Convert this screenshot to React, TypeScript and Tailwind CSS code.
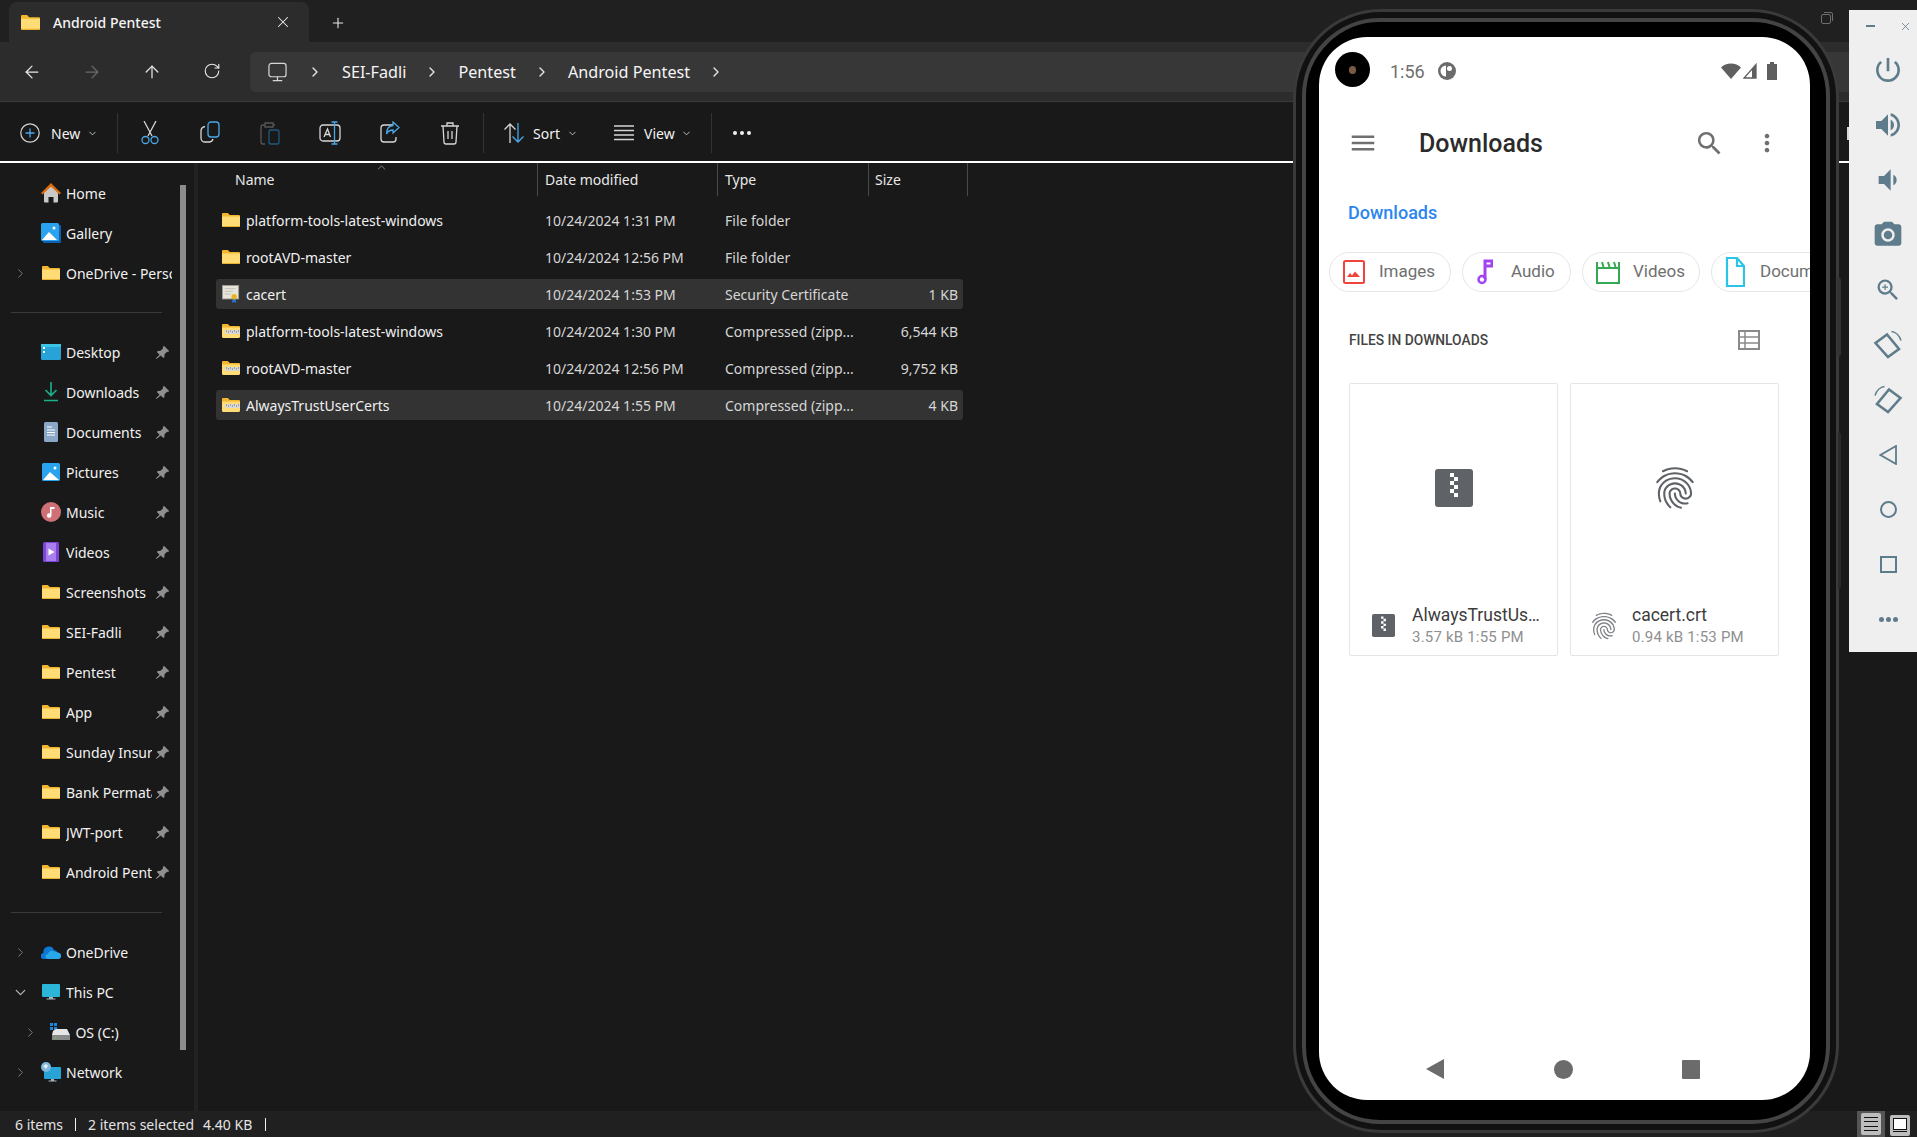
import type { ReactNode } from "react";
import {
	ArrowLeft,
	ArrowRight,
	ArrowUp,
	ChevronDown,
	ChevronRight,
	ChevronUp,
	Plus,
	RotateCw,
	X,
} from "lucide-react";
import {
	MdFingerprint,
	MdMenu,
	MdMoreVert,
	MdPowerSettingsNew,
	MdSearch,
	MdVolumeDown,
	MdVolumeUp,
	MdPhotoCamera,
	MdZoomIn,
} from "react-icons/md";

const UI_FONT = "font-['Noto_Sans','Open_Sans',sans-serif]";

function Folder({ className = "" }: { className?: string }) {
	return (
		<svg viewBox="0 0 18 14" className={className}>
			<path d="M0 1.2C0 .5.5 0 1.2 0h4.6l2 2h9c.7 0 1.2.5 1.2 1.2V6H0z" fill="#f4b62c" />
			<path d="M0 3.4h18v9.4c0 .7-.5 1.2-1.2 1.2H1.2C.5 14 0 13.500 0 12.800z" fill="#ffdc76" />
			<path d="M0 13h18v.3c-.2.4-.6.7-1.200.7H1.200C.6 14 .2 13.700 0 13.300z" fill="#eab12c" />
		</svg>
	);
}

function ZipFolder({ className = "" }: { className?: string }) {
	return (
		<svg viewBox="0 0 18 14" className={className}>
			<path d="M0 1.2C0 .5.5 0 1.2 0h4.6l2 2h9c.7 0 1.2.5 1.2 1.2V6H0z" fill="#f4b62c" />
			<path d="M0 3.4h18v9.4c0 .7-.5 1.2-1.2 1.2H1.2C.5 14 0 13.500 0 12.800z" fill="#ffdc76" />
			<rect x="3" y="6" width="15" height="4" fill="#d8d8d8" />
			<path d="M4 7h1M6 8h1M8 7h1M10 8h1M12 7h1M14 8h1M16 7h1" stroke="#6a6a6a" strokeWidth="1.2" />
		</svg>
	);
}

function CertIcon() {
	return (
		<svg viewBox="0 0 20 20" className="h-[20px] w-[20px]">
			<rect x="0.5" y="0.5" width="18" height="15" fill="#e8e4d6" stroke="#9a9a9a" />
			<path d="M3 4h12M3 7h9M3 10h7" stroke="#bdbdbd" />
			<path d="M12 14l-1 6 2.500-1.200L16 20l-1-6z" fill="#2f6fd0" />
			<circle cx="13.500" cy="13" r="3" fill="#e6b422" />
		</svg>
	);
}

function PinIcon() {
	return (
		<svg viewBox="0 0 14 14" className="h-[15px] w-[15px]" fill="#8f8f8f">
			<path d="M8.300.8l4.900 4.900-1 .8-.9-.2-2.400 2.400-.1 2.500-1 1-2.500-2.500L1.500 13 .9 12.400 4.200 9 1.700 6.500l1-1 2.500-.1 2.400-2.400-.2-.9z" />
		</svg>
	);
}

const navIcons: Record<string, ReactNode> = {
	home: (
		<svg viewBox="0 0 20 20" className="h-[20px] w-[20px]">
			<path d="M3 9L10 3l7 6v9.500a1 1 0 0 1-1 1h-3.500V14h-5v5.500H4a1 1 0 0 1-1-1z" fill="#c9c9c9" />
			<path d="M0 10L10 0l10 10-1.500 1.500L10 3.500 1.500 11.500z" fill="#e26b0a" />
		</svg>
	),
	gallery: (
		<svg viewBox="0 0 20 20" className="h-[20px] w-[20px]">
			<rect x="2" y="2" width="18" height="18" rx="1" fill="#0f5fae" />
			<rect x="0" y="0" width="18" height="18" rx="1.500" fill="#2aa3ee" />
			<path d="M1 17l7-8 8 8z" fill="#fff" />
			<circle cx="13" cy="5" r="1.500" fill="#fff" />
		</svg>
	),
	desktop: (
		<svg viewBox="0 0 20 16" className="h-[16px] w-[20px]">
			<rect width="20" height="16" rx="1.500" fill="#27a3d8" />
			<rect y="0" width="20" height="3" fill="#3cc4e4" />
			<rect x="2" y="3" width="2" height="2" fill="#fff" />
			<rect x="2" y="7" width="2" height="2" fill="#fff" />
		</svg>
	),
	downloads: (
		<svg viewBox="0 0 16 20" className="h-[20px] w-[16px]" fill="none" stroke="#19b38b" strokeWidth="1.600">
			<path d="M8 0v13M2.500 8L8 13.500 13.500 8M1 18.500h14" />
		</svg>
	),
	documents: (
		<svg viewBox="0 0 14 20" className="h-[20px] w-[14px]">
			<rect width="14" height="20" rx="1.500" fill="#8aa7c7" />
			<path d="M3 5h5M3 8h8M3 10.500h8M3 13h8" stroke="#fff" />
		</svg>
	),
	pictures: (
		<svg viewBox="0 0 18 18" className="h-[18px] w-[18px]">
			<rect width="18" height="18" rx="1.500" fill="#2aa3ee" />
			<path d="M1 17l7-8 9 8z" fill="#fff" />
			<circle cx="13" cy="5" r="1.500" fill="#fff" />
		</svg>
	),
	music: (
		<svg viewBox="0 0 20 20" className="h-[20px] w-[20px]">
			<circle cx="10" cy="10" r="10" fill="#cf6f76" />
			<path d="M9 5h4.500v2H10.500v6.500a2.300 2.300 0 1 1-1.500-2.100z" fill="#fff" />
		</svg>
	),
	videos: (
		<svg viewBox="0 0 16 20" className="h-[20px] w-[16px]">
			<rect width="16" height="20" rx="1.500" fill="#7c45d8" />
			<rect x="3" y="1" width="10" height="18" fill="#a97ff0" />
			<path d="M5.500 6.500l6 3.500-6 3.500z" fill="#fff" />
		</svg>
	),
	onedrive: (
		<svg viewBox="0 0 20 14" className="h-[14px] w-[20px]">
			<path d="M3 14a3 3 0 0 1-.5-6 5.500 5.500 0 0 1 10.500-3 4 4 0 0 1 3.500 2.500A3.300 3.300 0 0 1 17 14z" fill="#0f78d4" />
			<path d="M7 14a2.500 2.500 0 0 1 0-5 4 4 0 0 1 6.500-2.200 3.500 3.500 0 0 1 3.500 1 3 3 0 0 1 0 6.200z" fill="#28a8ea" />
		</svg>
	),
	pc: (
		<svg viewBox="0 0 18 16" className="h-[16px] w-[18px]">
			<rect width="18" height="13" rx="1" fill="#2bb5d6" />
			<path d="M7 13h4v1.500h2.500v1h-9v-1H7z" fill="#a8b4bd" />
		</svg>
	),
	drive: (
		<svg viewBox="0 0 20 18" className="h-[18px] w-[20px]">
			<path d="M0 0h3v3H0zM4 0h3v3H4zM0 4h3v3H0zM4 4h3v3H4z" fill="#1b88e0" />
			<path d="M3 8l3-2h11l3 6H2z" fill="#e6e6e6" />
			<rect x="2" y="12" width="18" height="5" fill="#8a8a8a" />
			<rect x="5" y="14" width="1.500" height="1.500" fill="#43d45a" />
		</svg>
	),
	network: (
		<svg viewBox="0 0 20 20" className="h-[20px] w-[20px]">
			<rect x="3" y="5" width="17" height="12" rx="1" fill="#27a3d8" />
			<path d="M10 17h3v1.500h2.500v1h-8v-1H10z" fill="#a8b4bd" />
			<circle cx="5" cy="5" r="5" fill="#7fb8dc" />
			<path d="M2 4l3-2 2 2-2 3z" fill="#e4eef5" />
		</svg>
	),
};

type NavItem = { label: string; icon: ReactNode; pin?: boolean; chevron?: "right" | "down"; indent?: boolean };

function NavRow({ label, icon, pin, chevron, indent }: NavItem) {
	return (
		<div className={`flex h-10 items-center ${indent ? "pl-[10px]" : ""}`}>
			<div className="flex w-[41px] justify-center pl-[0px]">
				{chevron === "right" && <ChevronRight size={15} strokeWidth={1.6} className="text-[#7a7a7a]" />}
				{chevron === "down" && <ChevronDown size={17} strokeWidth={1.8} className="text-[#b8b8b8]" />}
			</div>
			<div className="flex w-[20px] justify-center">{icon}</div>
			<div className={`ml-[5px] overflow-hidden whitespace-nowrap text-[14px] text-[#f2f2f2] ${pin ? "w-[86px]" : "w-[106px]"}`}>
				{label}
			</div>
			{pin && (
				<div className="ml-[3px]">
					<PinIcon />
				</div>
			)}
		</div>
	);
}

const folder = <Folder className="h-[14px] w-[18px]" />;

const quickAccess: NavItem[] = [
	{ label: "Desktop", icon: navIcons.desktop, pin: true },
	{ label: "Downloads", icon: navIcons.downloads, pin: true },
	{ label: "Documents", icon: navIcons.documents, pin: true },
	{ label: "Pictures", icon: navIcons.pictures, pin: true },
	{ label: "Music", icon: navIcons.music, pin: true },
	{ label: "Videos", icon: navIcons.videos, pin: true },
	{ label: "Screenshots", icon: folder, pin: true },
	{ label: "SEI-Fadli", icon: folder, pin: true },
	{ label: "Pentest", icon: folder, pin: true },
	{ label: "App", icon: folder, pin: true },
	{ label: "Sunday Insurance", icon: folder, pin: true },
	{ label: "Bank Permata", icon: folder, pin: true },
	{ label: "JWT-port", icon: folder, pin: true },
	{ label: "Android Pentest", icon: folder, pin: true },
];

const files = [
	{ name: "platform-tools-latest-windows", date: "10/24/2024 1:31 PM", type: "File folder", size: "", kind: "folder" },
	{ name: "rootAVD-master", date: "10/24/2024 12:56 PM", type: "File folder", size: "", kind: "folder" },
	{ name: "cacert", date: "10/24/2024 1:53 PM", type: "Security Certificate", size: "1 KB", kind: "cert", selected: true },
	{ name: "platform-tools-latest-windows", date: "10/24/2024 1:30 PM", type: "Compressed (zipp...", size: "6,544 KB", kind: "zip" },
	{ name: "rootAVD-master", date: "10/24/2024 12:56 PM", type: "Compressed (zipp...", size: "9,752 KB", kind: "zip" },
	{ name: "AlwaysTrustUserCerts", date: "10/24/2024 1:55 PM", type: "Compressed (zipp...", size: "4 KB", kind: "zip", selected: true },
];

function ToolIcon({ children }: { children: ReactNode }) {
	return <div className="flex w-[60px] justify-center">{children}</div>;
}

function Divider() {
	return <div className="h-[40px] w-px bg-[#333333]" />;
}

function Toolbar() {
	return (
		<div className="flex h-[59px] items-center bg-[#191919] pt-[3px] text-[14px] text-[#f2f2f2]">
			<svg viewBox="0 0 20 20" className="ml-[20px] h-[20px] w-[20px]" fill="none">
				<circle cx="10" cy="10" r="9.200" stroke="#d6d6d6" strokeWidth="1.200" />
				<path d="M10 5.500v9M5.500 10h9" stroke="#4aa8e8" strokeWidth="1.300" />
			</svg>
			<span className="ml-[11px] w-[32px]">New</span>
			<ChevronDown size={11} className="ml-[4px] text-[#c8c8c8]" />
			<div className="ml-[19px]">
				<Divider />
			</div>
			<div className="ml-[2px] flex">
				<ToolIcon>
					<svg viewBox="0 0 20 24" className="h-[24px] w-[20px]" fill="none" strokeWidth="1.300">
						<path d="M4 0l8 15M16 0L8 15" stroke="#d6d6d6" />
						<circle cx="5.500" cy="19" r="3.500" stroke="#4aa8e8" />
						<circle cx="14.500" cy="19" r="3.500" stroke="#4aa8e8" />
					</svg>
				</ToolIcon>
				<ToolIcon>
					<svg viewBox="0 0 20 22" className="h-[22px] w-[20px]" fill="none" strokeWidth="1.300">
						<rect x="8" y="1" width="11" height="15" rx="3" stroke="#4aa8e8" />
						<path d="M5 5.500C2.500 6 1 7.500 1 10v7c0 2.500 2 4 4 4h4c2 0 3.500-1 4-3" stroke="#d6d6d6" />
					</svg>
				</ToolIcon>
				<ToolIcon>
					<svg viewBox="0 0 20 24" className="h-[24px] w-[20px]" fill="none" strokeWidth="1.300">
						<path d="M5 4H3a2 2 0 0 0-2 2v15a2 2 0 0 0 2 2h2M13 4h2M5 2h8v4H5z" stroke="#575757" />
						<rect x="9" y="9" width="10" height="14" rx="2" stroke="#1f5a80" />
					</svg>
				</ToolIcon>
				<ToolIcon>
					<svg viewBox="0 0 22 24" className="h-[24px] w-[22px]" fill="none" strokeWidth="1.300">
						<rect x="1" y="4" width="20" height="16" rx="3" stroke="#d6d6d6" />
						<path d="M5 16l3.500-8 3 8M6 13.500h5" stroke="#d6d6d6" />
						<path d="M15.500 1v22M12.500 1h6M12.500 23h6" stroke="#4aa8e8" />
					</svg>
				</ToolIcon>
				<ToolIcon>
					<svg viewBox="0 0 20 22" className="h-[22px] w-[20px]" fill="none" strokeWidth="1.300">
						<path d="M13 4H4a3 3 0 0 0-3 3v11a3 3 0 0 0 3 3h9a3 3 0 0 0 3-3v-2" stroke="#d6d6d6" />
						<path d="M13 1l6 5.500-6 5.500V9c-3 0-5 1-6.500 4 0-5 2.500-8 6.500-8.500z" stroke="#4aa8e8" />
					</svg>
				</ToolIcon>
				<ToolIcon>
					<svg viewBox="0 0 20 24" className="h-[24px] w-[20px]" fill="none" stroke="#d6d6d6" strokeWidth="1.300">
						<path d="M1 5h18M7 5V2h6v3M3 5l1 16a2 2 0 0 0 2 2h8a2 2 0 0 0 2-2l1-16M8 10v8M12 10v8" />
					</svg>
				</ToolIcon>
			</div>
			<div className="ml-[3px]">
				<Divider />
			</div>
			<svg viewBox="0 0 22 22" className="ml-[19px] h-[22px] w-[22px]" fill="none" strokeWidth="1.300">
				<path d="M7 21V2M1.500 7.500L7 2l5.500 5.500" stroke="#d6d6d6" />
				<path d="M15 1v19M9.500 14.500L15 20l5.500-5.500" stroke="#4aa8e8" />
			</svg>
			<span className="ml-[8px] w-[30px]">Sort</span>
			<ChevronDown size={11} className="ml-[4px] text-[#c8c8c8]" />
			<svg viewBox="0 0 20 16" className="ml-[36px] h-[16px] w-[20px]" stroke="#d6d6d6" strokeWidth="1.300">
				<path d="M0 1h20M0 5.500h20M0 10h20M0 14.500h20" />
			</svg>
			<span className="ml-[10px] w-[34px]">View</span>
			<ChevronDown size={11} className="ml-[3px] text-[#c8c8c8]" />
			<div className="ml-[19px]">
				<Divider />
			</div>
			<div className="ml-[21px] flex gap-[3px]">
				<div className="h-[4px] w-[4px] rounded-full bg-[#f0f0f0]" />
				<div className="h-[4px] w-[4px] rounded-full bg-[#f0f0f0]" />
				<div className="h-[4px] w-[4px] rounded-full bg-[#f0f0f0]" />
			</div>
		</div>
	);
}

function Crumb() {
	return <ChevronRight size={16} strokeWidth={2} className="text-[#e6e6e6]" />;
}

function AddressRow() {
	return (
		<div className="flex h-[60px] items-center border-b border-[#3a3a3a] bg-[#2c2c2c]">
			<div className="flex w-[250px] pl-[2px] text-[#e8e8e8]">
				<div className="flex w-[60px] justify-center">
					<ArrowLeft size={20} strokeWidth={1.5} />
				</div>
				<div className="flex w-[60px] justify-center text-[#6b6b6b]">
					<ArrowRight size={20} strokeWidth={1.5} />
				</div>
				<div className="flex w-[60px] justify-center">
					<ArrowUp size={20} strokeWidth={1.5} />
				</div>
				<div className="flex w-[60px] justify-center">
					<RotateCw size={18} strokeWidth={1.5} />
				</div>
			</div>
			<div className="flex h-[40px] flex-1 items-center rounded-l-md bg-[#373737] pt-[1px] text-[16.2px] text-[#f5f5f5]">
				<svg viewBox="0 0 20 20" className="ml-[18px] h-[20px] w-[19px]" fill="none" stroke="#d6d6d6" strokeWidth="1.300">
					<rect x="1" y="1" width="18" height="14" rx="2.500" />
					<path d="M10 15v4M5 19h10" />
				</svg>
				<div className="ml-[20px] mr-[19px]">
					<Crumb />
				</div>
				<span>SEI-Fadli</span>
				<div className="mx-[18px]">
					<Crumb />
				</div>
				<span>Pentest</span>
				<div className="mx-[18px]">
					<Crumb />
				</div>
				<span>Android Pentest</span>
				<div className="ml-[18px]">
					<Crumb />
				</div>
			</div>
		</div>
	);
}

function TabBar() {
	return (
		<div className="flex h-[42px] items-end bg-[#202020] pl-[9px]">
			<div className="flex h-[40px] w-[300px] items-center rounded-t-lg bg-[#2c2c2c] pl-[12px] text-[14px] font-medium text-[#f5f5f5]">
				<Folder className="h-[15px] w-[19px]" />
				<span className="ml-[13px]">Android Pentest</span>
				<X size={18} strokeWidth={1.4} className="ml-auto mr-[17px] text-[#e8e8e8]" />
			</div>
			<div className="mb-[11px] ml-[21px] text-[#e8e8e8]">
				<Plus size={16} strokeWidth={1.6} />
			</div>
		</div>
	);
}

function Sidebar() {
	return (
		<div className="box-content flex w-[194px] border-r-[4px] border-[#222222]">
			<div className="w-[180px] pt-[10px]">
				<NavRow label="Home" icon={navIcons.home} />
				<NavRow label="Gallery" icon={navIcons.gallery} />
				<NavRow label="OneDrive - Personal" icon={folder} chevron="right" />
				<div className="flex h-[39px] items-center pl-[11px]">
					<div className="h-px w-[151px] bg-[#3a3a3a]" />
				</div>
				{quickAccess.map((item) => (
					<NavRow key={item.label} {...item} />
				))}
				<div className="flex h-[40px] items-center pl-[11px]">
					<div className="h-px w-[151px] bg-[#3a3a3a]" />
				</div>
				<NavRow label="OneDrive" icon={navIcons.onedrive} chevron="right" />
				<NavRow label="This PC" icon={navIcons.pc} chevron="down" />
				<NavRow label="OS (C:)" icon={navIcons.drive} chevron="right" indent />
				<NavRow label="Network" icon={navIcons.network} chevron="right" />
			</div>
			<div className="mt-[22px] h-[865px] w-[6px] bg-[#8c8c8c]" />
		</div>
	);
}

function FileIcon({ kind }: { kind: string }) {
	if (kind === "cert") return <CertIcon />;
	if (kind === "zip") return <ZipFolder className="h-[14px] w-[18px]" />;
	return <Folder className="h-[14px] w-[18px]" />;
}

function FileList() {
	return (
		<div className="relative flex-1 pl-[18px] text-[14px] text-[#f0f0f0]">
			<ChevronUp size={13} strokeWidth={1.2} className="absolute left-[177px] top-[-2px] text-[#bdbdbd]" />
			<div className="flex h-[33px] items-center text-[#e8e8e8]">
				<div className="flex h-full w-[322px] items-center border-r border-[#4a4a4a] pl-[19px]">Name</div>
				<div className="flex h-full w-[180px] items-center border-r border-[#4a4a4a] pl-[7px]">Date modified</div>
				<div className="flex h-full w-[151px] items-center border-r border-[#4a4a4a] pl-[7px]">Type</div>
				<div className="flex h-full w-[99px] items-center border-r border-[#4a4a4a] pl-[6px]">Size</div>
			</div>
			<div className="mt-[9px] flex w-[747px] flex-col gap-[7px]">
				{files.map((f) => (
					<div key={f.name + f.date} className={`flex h-[30px] items-center rounded-[3px] ${f.selected ? "bg-[#333333]" : ""}`}>
						<div className="flex w-[321px] items-center pl-[6px]">
							<div className="flex w-[18px] justify-center">
								<FileIcon kind={f.kind} />
							</div>
							<span className="ml-[6px] whitespace-nowrap">{f.name}</span>
						</div>
						<div className="w-[180px] pl-[8px] text-[#d6d6d6]">{f.date}</div>
						<div className="w-[150px] pl-[8px] text-[#d6d6d6]">{f.type}</div>
						<div className="w-[96px] pr-[5px] text-right text-[#d6d6d6]">{f.size}</div>
					</div>
				))}
			</div>
		</div>
	);
}

function StatusBar() {
	return (
		<div className="relative flex h-[26px] items-center bg-[#202020] pl-[15px] text-[14px] text-[#e4e4e4]">
			<span>6 items</span>
			<div className="ml-[12px] h-[13px] w-px bg-[#f0f0f0]" />
			<span className="ml-[12px]">2 items selected</span>
			<span className="ml-[9px]">4.40 KB</span>
			<div className="ml-[13px] h-[13px] w-px bg-[#f0f0f0]" />
			<div className="absolute right-[32px] top-0 flex h-[26px] w-[28px] items-center justify-center bg-[#555555]">
				<div className="flex h-[22px] w-[20px] flex-col justify-evenly rounded-[2px] bg-[#bdbdbd] px-[3px]">
					<div className="h-px bg-[#111111]" />
					<div className="h-px bg-[#111111]" />
					<div className="h-px bg-[#111111]" />
					<div className="h-px bg-[#111111]" />
				</div>
			</div>
			<div className="absolute right-[7px] top-[4px] flex h-[21px] w-[20px] flex-col items-center rounded-[2px] bg-[#bdbdbd] p-[3px]">
				<div className="h-[12px] w-[14px] border border-[#111111] bg-white" />
				<div className="mt-[1px] h-px w-[14px] bg-[#111111]" />
			</div>
		</div>
	);
}

function ZipGlyph({ size }: { size: "lg" | "sm" }) {
	const big = size === "lg";
	return (
		<svg viewBox="0 0 38 38" className={big ? "h-[38px] w-[38px]" : "h-[23px] w-[23px]"}>
			<rect width="38" height="38" rx="3" fill="#5f6368" />
			<path d="M15 4h4v4h-4zM19 8h4v4h-4zM15 12h4v4h-4zM19 16h4v4h-4zM15 20h4v4h-4zM19 24h4v4h-4z" fill="#fff" />
		</svg>
	);
}

function Chip({ icon, label, className }: { icon: ReactNode; label: string; className: string }) {
	return (
		<div className={`flex h-[40px] shrink-0 items-center rounded-full border-[1.5px] border-[#e6e6e6] pl-[13px] text-[17px] text-[#6f6f6f] ${className}`}>
			{icon}
			<span>{label}</span>
		</div>
	);
}

function FileCard({ icon, small, title, sub, pad }: { icon: ReactNode; small: ReactNode; title: string; sub: string; pad: string }) {
	return (
		<div className="flex h-[273px] w-[209px] flex-col rounded-[2px] border-[1.5px] border-[#e5e5e5]">
			<div className="flex h-[208px] items-center justify-center">{icon}</div>
			<div className={`mt-[12px] flex items-center ${pad}`}>
				<div className="flex w-[23px] justify-center">{small}</div>
				<div className="ml-[17px] w-[128px] min-w-0">
					<div className="truncate text-[17.5px] leading-[22px] text-[#3c3c3c]">{title}</div>
					<div className="mt-[1px] text-[15px] leading-[20px] tracking-[0.2px] text-[#8f8f8f]">{sub}</div>
				</div>
			</div>
		</div>
	);
}

function PhoneScreen() {
	return (
		<div className="relative flex h-[1063px] w-[491px] flex-col overflow-hidden rounded-[48px] bg-white font-['Roboto',sans-serif]">
			<div className="absolute left-[16px] top-[15px] flex h-[35px] w-[35px] items-center justify-center rounded-full bg-black">
				<div className="h-[8px] w-[7px] rounded-full bg-[#7a5a44]" />
			</div>
			<div className="flex h-[68px] shrink-0 items-center pl-[71px] pr-[31px] text-[#6f6f6f]">
				<span className="text-[18px]">1:56</span>
				<svg viewBox="0 0 18 18" className="ml-[13px] h-[18px] w-[18px]">
					<circle cx="9" cy="9" r="9" fill="#6b6b6b" />
					<path d="M8 3.500a5.500 5.500 0 0 0 0 11z" fill="#fff" />
					<circle cx="11.500" cy="6.500" r="2.500" fill="#fff" />
				</svg>
				<svg viewBox="0 0 20 16" className="ml-auto h-[16px] w-[20px]">
					<path d="M0 4.500C5-1 15-1 20 4.500L10 16z" fill="#5f5f5f" />
				</svg>
				<svg viewBox="0 0 14 16" className="ml-[2px] h-[16px] w-[14px]" fill="none">
					<path d="M13 1.500V15H1z" stroke="#5f5f5f" strokeWidth="1.300" />
					<path d="M9 6v9h4V2z" fill="#5f5f5f" />
				</svg>
				<svg viewBox="0 0 10 18" className="ml-[10px] mr-[2px] h-[18px] w-[10px]">
					<path d="M3 0h4v2h3v16H0V2h3z" fill="#5f5f5f" />
				</svg>
			</div>
			<div className="flex h-[76px] shrink-0 items-center pl-[30px] text-[#6f6f6f]">
				<MdMenu size={30} className="-ml-[1px]" />
				<span className="ml-[41px] pt-[2px] text-[25px] font-medium text-[#2b2b2b]">Downloads</span>
				<MdSearch size={31} className="ml-auto" />
				<MdMoreVert size={28} className="ml-[28px] mr-[29px]" />
			</div>
			<div className="flex h-[66px] shrink-0 items-center pb-[4px] pl-[29px] text-[18px] font-medium text-[#2a86ee]">Downloads</div>
			<div className="flex h-[45px] shrink-0 gap-[11px] overflow-hidden pl-[10px] pt-[5px]">
				<Chip
					className="w-[122px]"
					label="Images"
					icon={
						<svg viewBox="0 0 22 24" className="mr-[14px] h-[24px] w-[22px]" fill="none">
							<rect x="1" y="1" width="20" height="22" rx="1.500" stroke="#f0443a" strokeWidth="2" />
							<path d="M4 17l3-4 2 2.500 3-4 5 5.500z" fill="#f0443a" />
						</svg>
					}
				/>
				<Chip
					className="w-[109px]"
					label="Audio"
					icon={
						<svg viewBox="0 0 16 26" className="ml-[1px] mr-[18px] h-[26px] w-[16px]" fill="none">
							<path d="M8 20V2h7v5H9" stroke="#a142f4" strokeWidth="3" />
							<circle cx="5" cy="20.500" r="3.500" stroke="#a142f4" strokeWidth="2.500" />
						</svg>
					}
				/>
				<Chip
					className="w-[118px]"
					label="Videos"
					icon={
						<svg viewBox="0 0 24 24" className="mr-[13px] h-[24px] w-[24px]" fill="none" stroke="#34a853" strokeWidth="2">
							<path d="M1 2v21h22V2M1 8h22M6 2l1.500 5M12 2l1.500 5M18 2l1.500 5" />
						</svg>
					}
				/>
				<Chip
					className="w-[140px]"
					label="Documents"
					icon={
						<svg viewBox="0 0 20 30" className="mr-[15px] h-[30px] w-[20px]" fill="none" stroke="#29c4e6" strokeWidth="2.200">
							<path d="M2 1h10l7 8v20H2zM12 1v8h7" />
						</svg>
					}
				/>
			</div>
			<div className="flex h-[91px] shrink-0 items-center pl-[30px] pr-[50px] pt-[5px] text-[13.8px] font-medium text-[#444444]">
				<span>FILES IN DOWNLOADS</span>
				<svg viewBox="0 0 22 20" className="ml-auto h-[20px] w-[22px]" fill="none" stroke="#8a8a8a" strokeWidth="2">
					<rect x="1" y="1" width="20" height="18" />
					<path d="M1 7h20M1 13h20M7 1v18" strokeWidth="1.500" />
				</svg>
			</div>
			<div className="flex flex-1 items-start gap-[12px] pl-[30px]">
				<FileCard
					icon={<ZipGlyph size="lg" />}
					small={<ZipGlyph size="sm" />}
					title="AlwaysTrustUserCerts.zip"
					sub="3.57 kB  1:55 PM"
					pad="pl-[22px]"
				/>
				<FileCard
					icon={<MdFingerprint size={50} className="text-[#5f6368]" />}
					small={<MdFingerprint size={32} className="shrink-0 text-[#7f8387]" />}
					title="cacert.crt"
					sub="0.94 kB  1:53 PM"
					pad="pl-[21px]"
				/>
			</div>
			<div className="flex h-[62px] shrink-0 items-center">
				<div className="flex w-[491px] items-center pl-[107px]">
					<svg viewBox="0 0 18 20" className="h-[20px] w-[18px]">
						<path d="M18 0v20L0 10z" fill="#6b6b6b" />
					</svg>
					<div className="ml-[110px] h-[19px] w-[19px] rounded-full bg-[#6b6b6b]" />
					<div className="ml-[109px] h-[19px] w-[18px] rounded-[1px] bg-[#6b6b6b]" />
				</div>
			</div>
		</div>
	);
}

function Phone() {
	return (
		<div className="absolute left-[1293px] top-[9px] h-[1124px] w-[546px] rounded-[88px] border-[3px] border-[#3a3a3a] bg-[#111111] p-[6px]">
			<div className="h-full w-full rounded-[78px] border-[4px] border-[#444444] bg-black pl-[13px] pt-[15px]">
				<PhoneScreen />
			</div>
			<div className="absolute left-[541px] top-[265px] h-[80px] w-[4px] rounded-r-sm bg-[#333333]" />
			<div className="absolute left-[542px] top-[420px] h-[157px] w-[3px] rounded-r-sm bg-[#2a2a2a]" />
		</div>
	);
}

function PanelIcon({ children }: { children: ReactNode }) {
	return <div className="flex h-[55px] items-center justify-center pl-[10px] text-[#5e7c8b]">{children}</div>;
}

function EmulatorPanel() {
	return (
		<div className="absolute left-[1849px] top-[10px] flex h-[642px] w-[68px] flex-col bg-[#efefef]">
			<div className="flex h-[32px] items-center justify-between pl-[17px] pr-[5px] text-[#5e7c8b]">
				<div className="h-[1.500px] w-[9px] bg-[#5e7c8b]" />
				<X size={13} strokeWidth={1.5} />
			</div>
			<PanelIcon>
				<MdPowerSettingsNew size={32} />
			</PanelIcon>
			<PanelIcon>
				<MdVolumeUp size={32} />
			</PanelIcon>
			<PanelIcon>
				<MdVolumeDown size={32} />
			</PanelIcon>
			<PanelIcon>
				<MdPhotoCamera size={32} />
			</PanelIcon>
			<PanelIcon>
				<MdZoomIn size={28} />
			</PanelIcon>
			<PanelIcon>
				<svg viewBox="0 0 30 30" className="h-[30px] w-[30px]" fill="none" stroke="currentColor" strokeWidth="2.600">
					<path d="M2.500 13L14 4.500 26 19 15 27z" />
					<path d="M18.500 1.500c4 .5 8 4 9.500 9" strokeWidth="1.500" />
				</svg>
			</PanelIcon>
			<PanelIcon>
				<svg viewBox="0 0 30 30" className="h-[30px] w-[30px]" fill="none" stroke="currentColor" strokeWidth="2.600">
					<path d="M27.500 13L16 4.500 4 19l11 8z" />
					<path d="M11.500 1.500c-4 .5-8 4-9.500 9" strokeWidth="1.500" />
				</svg>
			</PanelIcon>
			<PanelIcon>
				<svg viewBox="0 0 18 20" className="h-[20px] w-[18px]" fill="none" stroke="currentColor" strokeWidth="1.800">
					<path d="M17 1v18L1.500 10z" />
				</svg>
			</PanelIcon>
			<PanelIcon>
				<div className="h-[17px] w-[17px] rounded-full border-[2px] border-[#5e7c8b]" />
			</PanelIcon>
			<PanelIcon>
				<div className="h-[17px] w-[17px] border-[2px] border-[#5e7c8b]" />
			</PanelIcon>
			<PanelIcon>
				<div className="flex gap-[2px]">
					<div className="h-[5px] w-[5px] rounded-full bg-[#5e7c8b]" />
					<div className="h-[5px] w-[5px] rounded-full bg-[#5e7c8b]" />
					<div className="h-[5px] w-[5px] rounded-full bg-[#5e7c8b]" />
				</div>
			</PanelIcon>
		</div>
	);
}

export default function App() {
	return (
		<div className={`relative h-[1137px] w-[1917px] overflow-hidden bg-[#191919] ${UI_FONT}`}>
			<div className="flex h-full flex-col">
				<TabBar />
				<AddressRow />
				<Toolbar />
				<div className="h-[2px] bg-white" />
				<div className="flex h-[948px]">
					<Sidebar />
					<FileList />
				</div>
				<StatusBar />
			</div>
			<svg viewBox="0 0 12 12" className="absolute left-[1821px] top-[12px] h-[12px] w-[12px]" fill="none" stroke="#6e6e6e">
				<rect x="0.500" y="2.500" width="9" height="9" rx="1.500" />
				<path d="M3 .5h7a1.500 1.500 0 0 1 1.500 1.500v7" />
			</svg>
			<Phone />
			<div className="absolute left-[1847px] top-[127px] h-[13px] w-[2px] bg-[#d8d8d8]" />
			<EmulatorPanel />
		</div>
	);
}
